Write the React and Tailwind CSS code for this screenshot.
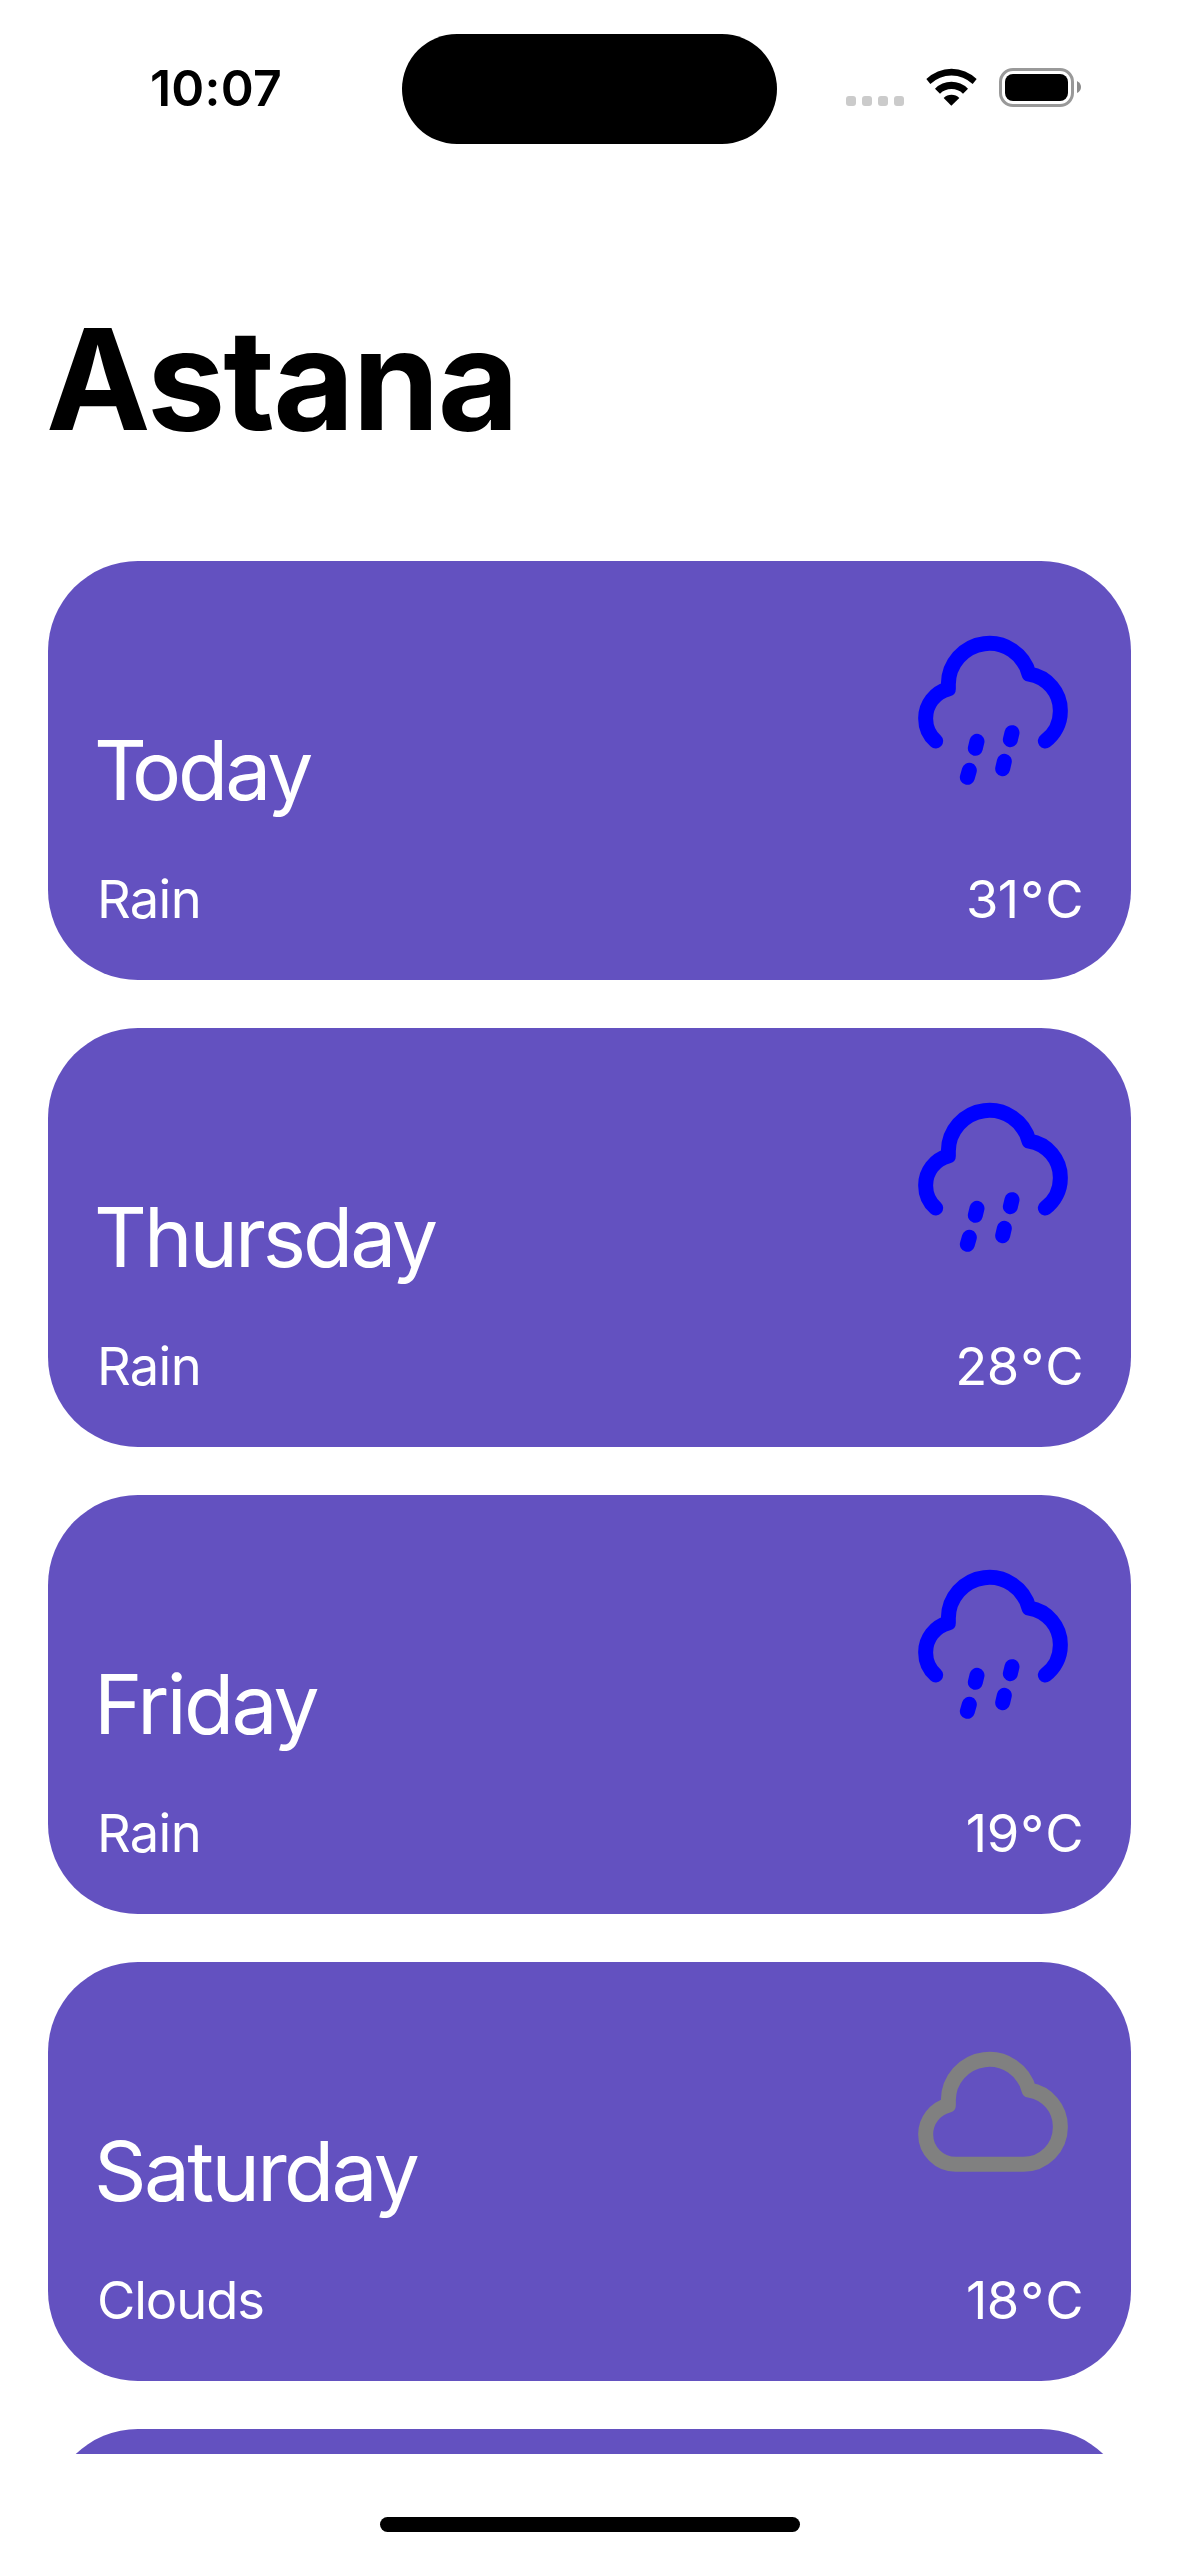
const days = [
  { day: "Today", sky: "Rain", temp: 31, dayGap: "tracking-[-3px] first-letter:tracking-[-15px]", skyGap: "tracking-[-0.7px]" },
  { day: "Thursday", sky: "Rain", temp: 28, dayGap: "tracking-[-3px]", skyGap: "tracking-[-0.7px]" },
  { day: "Friday", sky: "Rain", temp: 19, dayGap: "tracking-[-2.7px]", skyGap: "tracking-[-0.7px]" },
  { day: "Saturday", sky: "Clouds", temp: 18, dayGap: "tracking-[-2.7px]", skyGap: "tracking-[-1.1px]" },
];

function WeatherIcon({ sky }) {
  const rain = sky === "Rain";
  return (
    <svg
      className="mt-[69px] mr-[11px] size-[155px] shrink-0 self-start"
      viewBox="105 90 465 465"
      fill="none"
      stroke={rain ? "#0000ff" : "#808080"}
      strokeWidth="45"
      strokeLinecap="round"
      strokeLinejoin="round"
    >
      {rain ? (
        <>
          <path d="M167 423A90 90 0 0 1 137 355A90 90 0 0 1 205 267V253A123 123 0 0 1 447 222A111 111 0 0 1 541 334A111 111 0 0 1 496 423" />
          <path d="M291 424L286 445M396 398L391 419M268 511L262 532M373 484L368 506" />
        </>
      ) : (
        <path d="M227 490A90 90 0 0 1 137 400A90 90 0 0 1 205 313V298A123 123 0 0 1 447 267A111 111 0 0 1 541 379A111 111 0 0 1 430 490Z" />
      )}
    </svg>
  );
}

function DayCard({ item }) {
  return (
    <article className="h-[419px] shrink-0 rounded-[90px] bg-[#6351c0] px-[50px] text-white">
      <div className="flex h-[260px] items-end justify-between">
        <h2 className={`-ml-[4px] text-[82px] leading-[100px] ${item.dayGap}`}>{item.day}</h2>
        <WeatherIcon sky={item.sky} />
      </div>
      <div className="mt-[46px] flex justify-between text-[52.5px] leading-[64px]">
        <span className={`-ml-[1px] ${item.skyGap}`}>{item.sky}</span>
        <span className="-mr-[2px] tracking-[-0.5px]">
          {item.temp}
          <span className="relative top-[1px] px-[1.5px]">°</span>C
        </span>
      </div>
    </article>
  );
}

function StatusBar() {
  return (
    <header className="flex h-[178px] pt-[34px] pr-[98px] pl-[150px]">
      <time className="mt-[22px] w-[252px] text-[50px] leading-[64px] font-semibold tracking-[0.2px]">10:07</time>
      <div className="h-[110px] w-[375px] rounded-full bg-black" />
      <div className="ml-auto flex">
        <div className="mt-[62px] flex gap-[6px]">
          {[0, 1, 2, 3].map((n) => (
            <i key={n} className="size-[10px] rounded-[3px] bg-[#cbcbcb]" />
          ))}
        </div>
        <svg className="mt-[34px] ml-[22px] h-[38px] w-[51px]" viewBox="318 85 153 114">
          <path d="M319 118A108 108 0 0 1 470 118L458 133A92 92 0 0 0 331 133Z" />
          <path d="M345 147A70 70 0 0 1 444 147L429 162A50 50 0 0 0 360 162Z" />
          <path d="M371 175A34 34 0 0 1 418 175L394 198Z" />
        </svg>
        <div className="mt-[34px] ml-[22px] h-[39px] w-[75px] rounded-[14px] border-[3px] border-[#999] p-[3px]">
          <div className="h-[27px] w-[63px] rounded-[8px] bg-black" />
        </div>
        <svg className="mt-[47px] ml-[3px] h-[12px] w-[4px]" viewBox="0 0 4 12">
          <path d="M0 0Q4 2 4 6T0 12Z" fill="#8c8c8c" />
        </svg>
      </div>
    </header>
  );
}

export default function App() {
  return (
    <div className="flex h-[2556px] w-[1179px] flex-col overflow-hidden bg-white font-['Inter',sans-serif] text-black">
      <StatusBar />
      <h1 className="mt-[111px] ml-[46px] text-[140px] leading-[180px] font-bold tracking-[-2px]">Astana</h1>
      <main className="mt-[92px] flex h-[1893px] shrink-0 flex-col gap-[48px] overflow-hidden px-[48px]">
        {days.map((item) => (
          <DayCard key={item.day} item={item} />
        ))}
        <article className="h-[419px] shrink-0 rounded-[90px] bg-[#6351c0]" />
      </main>
      <div className="mx-auto mt-[63px] h-[15px] w-[420px] shrink-0 rounded-full bg-black" />
    </div>
  );
}
